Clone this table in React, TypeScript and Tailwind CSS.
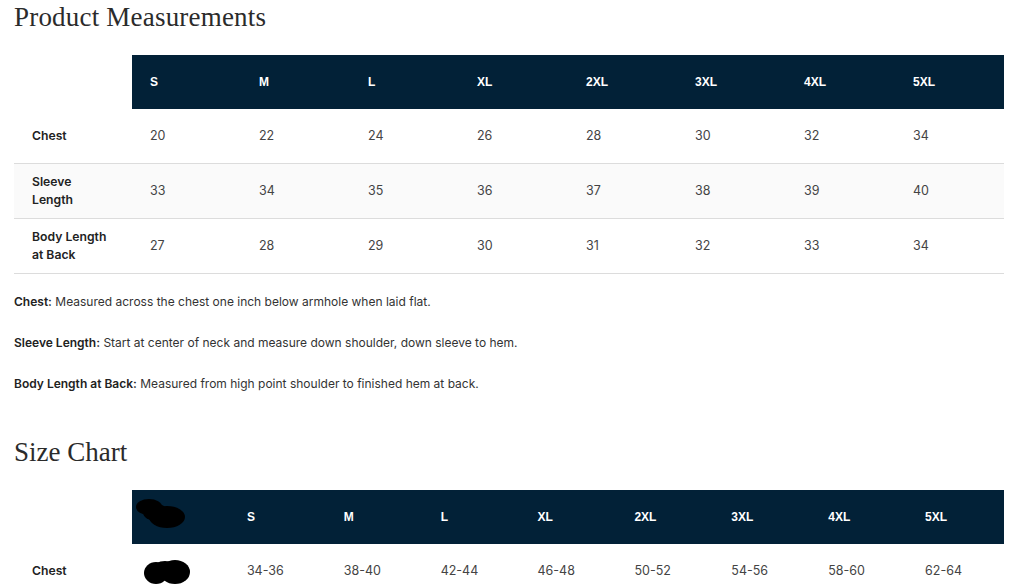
import React from 'react';

const sizes1 = ['S', 'M', 'L', 'XL', '2XL', '3XL', '4XL', '5XL'];

const measurements = [
    { label: ['Chest'], values: ['20', '22', '24', '26', '28', '30', '32', '34'] },
    { label: ['Sleeve', 'Length'], values: ['33', '34', '35', '36', '37', '38', '39', '40'] },
    { label: ['Body Length', 'at Back'], values: ['27', '28', '29', '30', '31', '32', '33', '34'] },
];

const notes = [
    { term: 'Chest:', text: 'Measured across the chest one inch below armhole when laid flat.' },
    { term: 'Sleeve Length:', text: 'Start at center of neck and measure down shoulder, down sleeve to hem.' },
    { term: 'Body Length at Back:', text: 'Measured from high point shoulder to finished hem at back.' },
];

const chartValues = ['34-36', '38-40', '42-44', '46-48', '50-52', '54-56', '58-60', '62-64'];

// redaction scribble, drawn over the hidden cell
const Blot = ({ w, h, variant }: { w: number; h: number; variant: 'a' | 'b' }) => (
    <svg width={w} height={h} viewBox={`0 0 ${w} ${h}`} className="block">
        {variant === 'a' ? (
            <>
                <ellipse cx="14" cy="9" rx="13" ry="8" fill="#000" />
                <ellipse cx="32" cy="19" rx="18" ry="11" fill="#000" />
                <ellipse cx="20" cy="14" rx="12" ry="9" fill="#000" />
            </>
        ) : (
            <>
                <ellipse cx="13" cy="13" rx="12" ry="11" fill="#000" />
                <ellipse cx="32" cy="12" rx="15" ry="12" fill="#000" />
                <ellipse cx="22" cy="9" rx="12" ry="8" fill="#000" />
            </>
        )}
    </svg>
);

export default function App() {
    return (
        <div className="w-[1024px] h-[586px] overflow-hidden bg-white px-[14px] text-[#333] font-['Inter',sans-serif]">
            <h2 className="text-[27px] leading-[34px] text-[#2b2b2b] font-['Liberation_Serif','DejaVu_Serif',serif] tracking-[0.2px]">
                Product Measurements
            </h2>

            {/* Measurements table */}
            <div className="mt-[21px] w-[990px]">
                <div className="grid grid-cols-[118px_repeat(8,109px)] h-[54px] items-center">
                    <div />
                    {sizes1.map((s) => (
                        <div
                            key={s}
                            className="h-full flex items-center bg-[#022137] pl-[18px] text-white text-[12px] font-bold font-['Liberation_Sans',sans-serif]"
                        >
                            {s}
                        </div>
                    ))}
                </div>
                {measurements.map((row, i) => (
                    <div
                        key={i}
                        className={`grid grid-cols-[118px_repeat(8,109px)] h-[55px] items-center border-b border-[#dcdcdc] ${i === 1 ? 'bg-[#fafafa]' : 'bg-white'}`}
                    >
                        <div className="pl-[18px] text-[12.2px] leading-[18px] font-semibold text-[#222]">
                            {row.label.map((l) => (
                                <div key={l}>{l}</div>
                            ))}
                        </div>
                        {row.values.map((v, j) => (
                            <div key={j} className="pl-[18px] text-[12.5px] text-[#444]">
                                {v}
                            </div>
                        ))}
                    </div>
                ))}
            </div>

            {/* Notes */}
            <div className="mt-[19px] flex flex-col gap-[23px] text-[12px] leading-[18px] text-[#333]">
                {notes.map((n) => (
                    <p key={n.term}>
                        <span className="font-semibold text-[#222]">{n.term}</span> {n.text}
                    </p>
                ))}
            </div>

            <h2 className="mt-[42px] text-[27px] leading-[34px] text-[#2b2b2b] font-['Liberation_Serif','DejaVu_Serif',serif]">
                Size Chart
            </h2>

            {/* Size chart */}
            <div className="mt-[21px] w-[990px]">
                <div className="grid grid-cols-[118px_repeat(9,1fr)] h-[54px]">
                    <div />
                    <div className="h-full bg-[#022137] pl-[3px] pt-[8px]">
                        <Blot w={50} h={30} variant="a" />
                    </div>
                    {sizes1.map((s) => (
                        <div
                            key={s}
                            className="h-full flex items-center bg-[#022137] pl-[18px] text-white text-[12px] font-bold font-['Liberation_Sans',sans-serif]"
                        >
                            {s}
                        </div>
                    ))}
                </div>
                <div className="grid grid-cols-[118px_repeat(9,1fr)] h-[55px] items-center">
                    <div className="pl-[18px] text-[12.2px] font-semibold text-[#222]">Chest</div>
                    <div className="pl-[11px] pt-[2px]">
                        <Blot w={48} h={26} variant="b" />
                    </div>
                    {chartValues.map((v) => (
                        <div key={v} className="pl-[18px] text-[12.5px] text-[#444]">
                            {v}
                        </div>
                    ))}
                </div>
            </div>
        </div>
    );
}
